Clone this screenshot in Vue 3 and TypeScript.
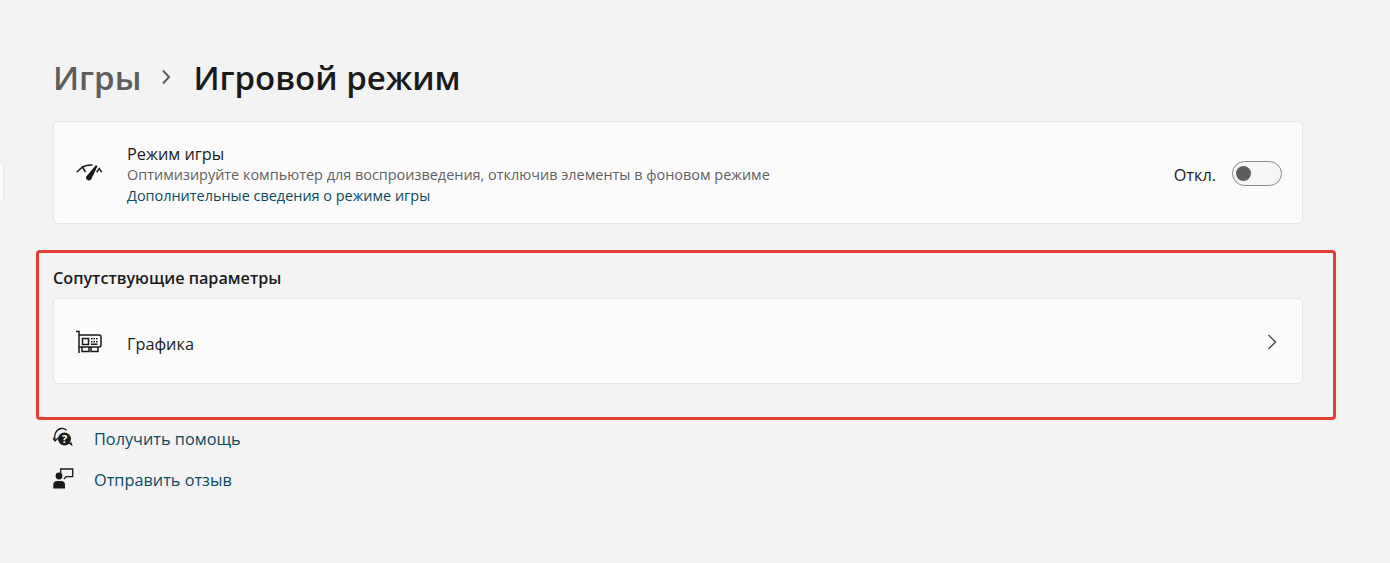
<template>
  <div class="page">
    <div class="nav-sliver"></div>
    <header class="crumbs">
      <span class="parent">Игры</span>
      <svg class="crumb-arrow" width="12" height="16" viewBox="0 0 12 16">
        <path d="M3 1.500 9 8l-6 6.500" fill="none" stroke="#5d5d5d" stroke-width="2" />
      </svg>
      <h1>Игровой режим</h1>
    </header>

    <div class="card game-card">
      <svg class="row-icon" width="28" height="24" viewBox="0 0 28 24">
        <g fill="none" stroke="#1a1a1a" stroke-width="1.500">
          <path d="M.7 11.200 6.500 6l3 5" />
          <path d="M6.500 6C9.500 4.500 13 3.800 16.500 4" />
          <path d="M20.700 11.200 23.300 7.500l2.400 3.700" />
        </g>
        <path d="M19.800 4.300 21.600 5 15.500 17.800a2.900 2.900 0 0 1-5.400-2z" fill="#1a1a1a" />
      </svg>
      <div class="row-text">
        <div class="row-title">Режим игры</div>
        <div class="row-desc">Оптимизируйте компьютер для воспроизведения, отключив элементы в фоновом режиме</div>
        <a class="row-link">Дополнительные сведения о режиме игры</a>
      </div>
      <span class="toggle-label">Откл.</span>
      <button class="toggle" type="button"><span class="knob"></span></button>
    </div>

    <section class="related">
      <h2>Сопутствующие параметры</h2>
      <div class="card graphics-card">
        <svg class="row-icon" width="28" height="24" viewBox="0 0 28 24">
          <g fill="none" stroke="#1a1a1a" stroke-width="1.500">
            <path d="M0 2.500h3v21.500" />
            <path d="M3 6h20a2 2 0 0 1 2 2v8a2 2 0 0 1-2 2H3" />
            <path d="M6 18v4.500h7V18M15 18v4.500h7V18" />
            <rect x="6.500" y="9.500" width="6" height="6" />
          </g>
          <path d="M15 9h1.500v1.500H15zM17.500 9H19v1.500h-1.500zM20 9h1.500v1.500H20zM15 12h1.500v1.500H15zM17.500 12H19v1.500h-1.500zM20 12h1.500v1.500H20zM15 14.500h6.500V16H15z" fill="#1a1a1a" />
        </svg>
        <span class="graphics-label">Графика</span>
        <svg class="row-arrow" width="12" height="16" viewBox="0 0 12 16">
          <path d="M2.500 1 9.500 8l-7 7" fill="none" stroke="#4a4a4a" stroke-width="1.400" />
        </svg>
      </div>
    </section>

    <div class="help-links">
      <a class="help-link">
        <svg width="24" height="24" viewBox="0 0 24 24">
          <path d="M2 13.500C.500 8 3 2.500 8 1.500c2-.3 4 .3 5.500 1.800" fill="none" stroke="#1a1a1a" stroke-width="1.300" />
          <path d="M-.500 10.500 2 14l3-3" fill="none" stroke="#1a1a1a" stroke-width="1.300" />
          <circle cx="11.500" cy="12" r="6.500" fill="#1a1a1a" />
          <path d="M15 16l4.700 3.200-1.200-4z" fill="#1a1a1a" />
          <text x="11.500" y="16" class="qmark">?</text>
        </svg>
        <span>Получить помощь</span>
      </a>
      <a class="help-link">
        <svg width="24" height="24" viewBox="0 0 24 24">
          <circle cx="6" cy="8" r="3.400" fill="#1a1a1a" />
          <path d="M.3 20.500V17A4 4 0 0 1 4.300 13h3.700a4 4 0 0 1 4 4v3.500z" fill="#1a1a1a" />
          <path d="M7.700 5V1h12v7.700H13L11 11" fill="none" stroke="#1a1a1a" stroke-width="1.300" />
        </svg>
        <span>Отправить отзыв</span>
      </a>
    </div>
  </div>
</template>

<script setup lang="ts">
</script>

<style>
html,
body {
  margin: 0;
  background: #f3f3f3;
}
</style>

<style scoped>
.page {
  position: relative;
  box-sizing: border-box;
  width: 1390px;
  height: 563px;
  padding: 52px 87px 0 53px;
  overflow: hidden;
  background: #f3f3f3;
  color: #1a1a1a;
  font-family: "Open Sans", "Noto Sans", sans-serif;
}

.nav-sliver {
  position: absolute;
  left: -6px;
  top: 162px;
  width: 8px;
  height: 38px;
  background: #fbfbfb;
  border: 1px solid #e5e5e5;
  border-radius: 4px;
}

.crumbs {
  display: flex;
  align-items: center;
  height: 50px;
}

.parent {
  font-size: 33px;
  font-weight: 600;
  color: #5d5d5d;
}

.crumb-arrow {
  margin: 0 21px 0 19px;
}

h1 {
  margin: 0;
  font-size: 33px;
  font-weight: 600;
  color: #1a1a1a;
}

.card {
  display: flex;
  align-items: center;
  box-sizing: border-box;
  background: #fbfbfb;
  border: 1px solid #e6e6e6;
  border-radius: 5px;
}

.game-card {
  height: 103px;
  margin-top: 19px;
  padding: 0 20px 0 22px;
}

.row-icon {
  flex: none;
  margin-right: 23px;
}

.row-text {
  flex: 1;
  min-width: 0;
  margin-top: 6px;
}

.row-title {
  font-size: 16.300px;
  line-height: 21px;
}

.row-desc {
  font-size: 14.450px;
  line-height: 20px;
  color: #616161;
}

.row-link {
  display: block;
  font-size: 14.450px;
  line-height: 22px;
  color: #0b4a5e;
}

.toggle-label {
  font-size: 16.300px;
  margin: 4px 16px 0 0;
}

.toggle {
  display: flex;
  align-items: center;
  box-sizing: border-box;
  width: 50px;
  height: 25px;
  margin-top: 1px;
  padding: 0 0 0 3px;
  background: #f6f6f6;
  border: 1px solid #8a8a8a;
  border-radius: 13px;
}

.knob {
  width: 15px;
  height: 15px;
  border-radius: 50%;
  background: #5d5d5d;
}

.related {
  box-sizing: border-box;
  height: 170px;
  margin: 26px -33px 0 -17px;
  padding: 14px 30px 0 14px;
  border: 3px solid #e53e36;
  border-radius: 4px;
}

h2 {
  margin: 0 0 9px;
  font-size: 16.200px;
  line-height: 22px;
  font-weight: 600;
  color: #1a1a1a;
}

.graphics-card {
  height: 86px;
  padding: 0 24px 0 22px;
}

.graphics-label {
  flex: 1;
  font-size: 16.300px;
  margin-top: 5px;
}

.row-arrow {
  margin-top: 2px;
}

.help-links {
  display: flex;
  flex-direction: column;
  gap: 17px;
  margin-top: 7px;
}

.help-link {
  display: flex;
  align-items: center;
  gap: 17px;
  height: 24px;
  font-size: 16.300px;
  color: #0b4a5e;
}

.qmark {
  fill: #fff;
  font-size: 11px;
  font-weight: 700;
  text-anchor: middle;
}
</style>
